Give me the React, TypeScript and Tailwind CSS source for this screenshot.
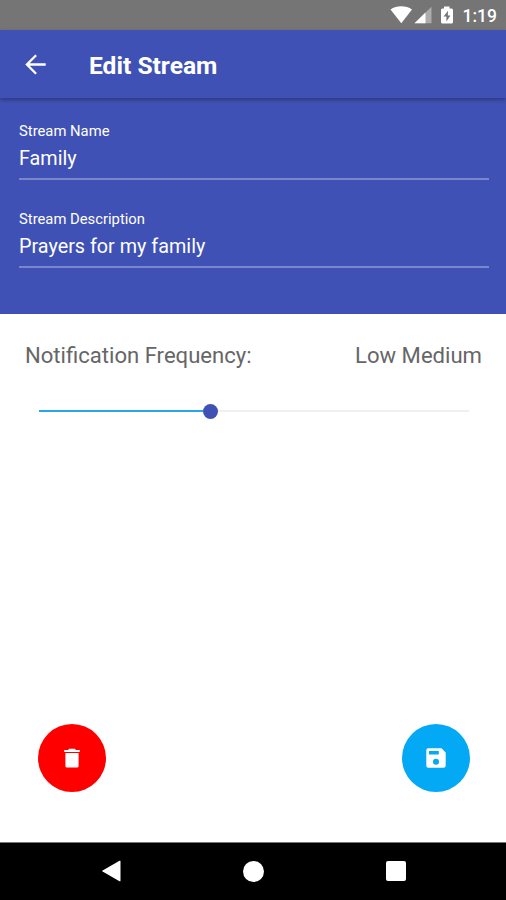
import type { ReactNode } from 'react'

const fields = [
  { id: 'name', label: 'Stream Name', value: 'Family' },
  { id: 'description', label: 'Stream Description', value: 'Prayers for my family' },
]

function App() {
  return (
    <div className="w-full h-screen flex flex-col bg-white overflow-hidden font-['Roboto',sans-serif]">
      <StatusBar />

      {/* Toolbar */}
      <header className="h-[68px] shrink-0 bg-[#3f51b5] flex items-center relative shadow-[0_2px_4px_rgba(0,0,0,0.3)]">
        <button aria-label="Back" className="ml-[25px]">
          <ArrowIcon />
        </button>
        <h1 className="ml-[42px] mt-1 text-[24.6px] leading-8 font-bold text-white whitespace-nowrap">
          Edit Stream
        </h1>
      </header>

      {/* Stream details */}
      <section className="h-[216px] shrink-0 bg-[#3f51b5] pl-[19px] pr-[17px] pt-[22px] flex flex-col gap-7 text-white">
        {fields.map((field) => (
          <div key={field.id} className="h-[60px] border-b-2 border-[#7986cb] shrink-0">
            <p className="text-[14.8px] leading-[22px] whitespace-nowrap">{field.label}</p>
            <p className="text-[19.8px] leading-[34px] whitespace-nowrap">{field.value}</p>
          </div>
        ))}
      </section>

      {/* Notification frequency */}
      <main className="flex-1 flex flex-col">
        <div className="flex justify-between pl-[25px] pr-6 pt-[25px] text-[22.1px] leading-8 text-[#666] whitespace-nowrap">
          <span>Notification Frequency:</span>
          <span>Low Medium</span>
        </div>
        <div className="ml-[39px] mr-[37px] mt-8 h-4 flex items-center">
          <div className="w-[164px] h-0.5 bg-[#29a5ec]" />
          <div className="size-[15px] rounded-full bg-[#3f51b5]" />
          <div className="flex-1 h-0.5 bg-[#f0f0f0]" />
        </div>

        <div className="mt-auto flex justify-between pl-[38px] pr-[36.5px] pb-[50px]">
          <RoundButton label="Delete" color="bg-[#ff0000]">
            <TrashIcon />
          </RoundButton>
          <RoundButton label="Save" color="bg-[#03a9f4]">
            <SaveIcon />
          </RoundButton>
        </div>
      </main>

      <NavBar />
    </div>
  )
}

function StatusBar() {
  return (
    <div className="h-[30px] shrink-0 bg-[#757575] flex items-center justify-end pr-[9px] text-white">
      <svg width="66" height="20" viewBox="0 0 66 20" fill="#fff">
        <path d="M0.5 4.6C6.5 0.2 16 0.2 22 4.6L11.3 18.3Z" />
        <path d="M24.5 18.3L41.5 1.8V18.3Z" opacity="0.4" />
        <path d="M24.5 18.3L35.5 7.5V18.3Z" />
        <path d="M54 1.5H59.5V3.4H61.5Q63 3.4 63 5V17Q63 18.6 61.5 18.6H52.5Q51 18.6 51 17V5Q51 3.4 52.5 3.4H54Z" />
        <path d="M58 5.8L53.6 11.6H56.4V16.4L60.4 10.4H57.8Z" fill="#757575" />
      </svg>
      <span className="ml-[7px] mt-0.5 text-[17.5px] leading-6 font-medium">1:19</span>
    </div>
  )
}

function RoundButton({ label, color, children }: { label: string; color: string; children: ReactNode }) {
  return (
    <button aria-label={label} className={`size-[68px] rounded-full flex items-center justify-center ${color}`}>
      {children}
    </button>
  )
}

function ArrowIcon() {
  return (
    <svg width="22" height="22" viewBox="0 0 22 22" fill="none" stroke="#fff" strokeWidth="2.3">
      <path d="M20.7 11.5H2.5M11.1 2.3L1.9 11.5L11.1 20.7" />
    </svg>
  )
}

function TrashIcon() {
  return (
    <svg width="16" height="20" viewBox="0 0 16 20" fill="#fff">
      <path d="M0.2 2H4.2L5.2 0.8H10.8L11.8 2H15.8V4H0.2Z" />
      <path d="M1.4 4.9H14.6V18Q14.6 19.6 13 19.6H3Q1.4 19.6 1.4 18Z" />
    </svg>
  )
}

function SaveIcon() {
  return (
    <svg width="20" height="20" viewBox="0 0 20 20" fill="#fff">
      <path
        fillRule="evenodd"
        d="M2.2 0.3H15.5L19.7 4.5V17.5Q19.7 19.7 17.5 19.7H2.2Q0.3 19.7 0.3 17.5V2.5Q0.3 0.3 2.2 0.3ZM3 3V6.5H12.8V3ZM10 10.8A3 3 0 1 0 10 16.8A3 3 0 1 0 10 10.8Z"
      />
    </svg>
  )
}

function NavBar() {
  return (
    <nav className="h-[58px] shrink-0 bg-black border-t border-[#777] flex items-center justify-between pl-[101px] pr-[100px] pb-px">
      <svg width="20" height="22" viewBox="0 0 20 22" fill="#fff">
        <path d="M18.5 0.8Q19.5 0.3 19.5 1.5V20.5Q19.5 21.7 18.5 21.2L1.6 11.6Q0.8 11 1.6 10.4Z" />
      </svg>
      <div className="size-[21px] rounded-full bg-white" />
      <div className="size-5 rounded-[2px] bg-white" />
    </nav>
  )
}

export default App
